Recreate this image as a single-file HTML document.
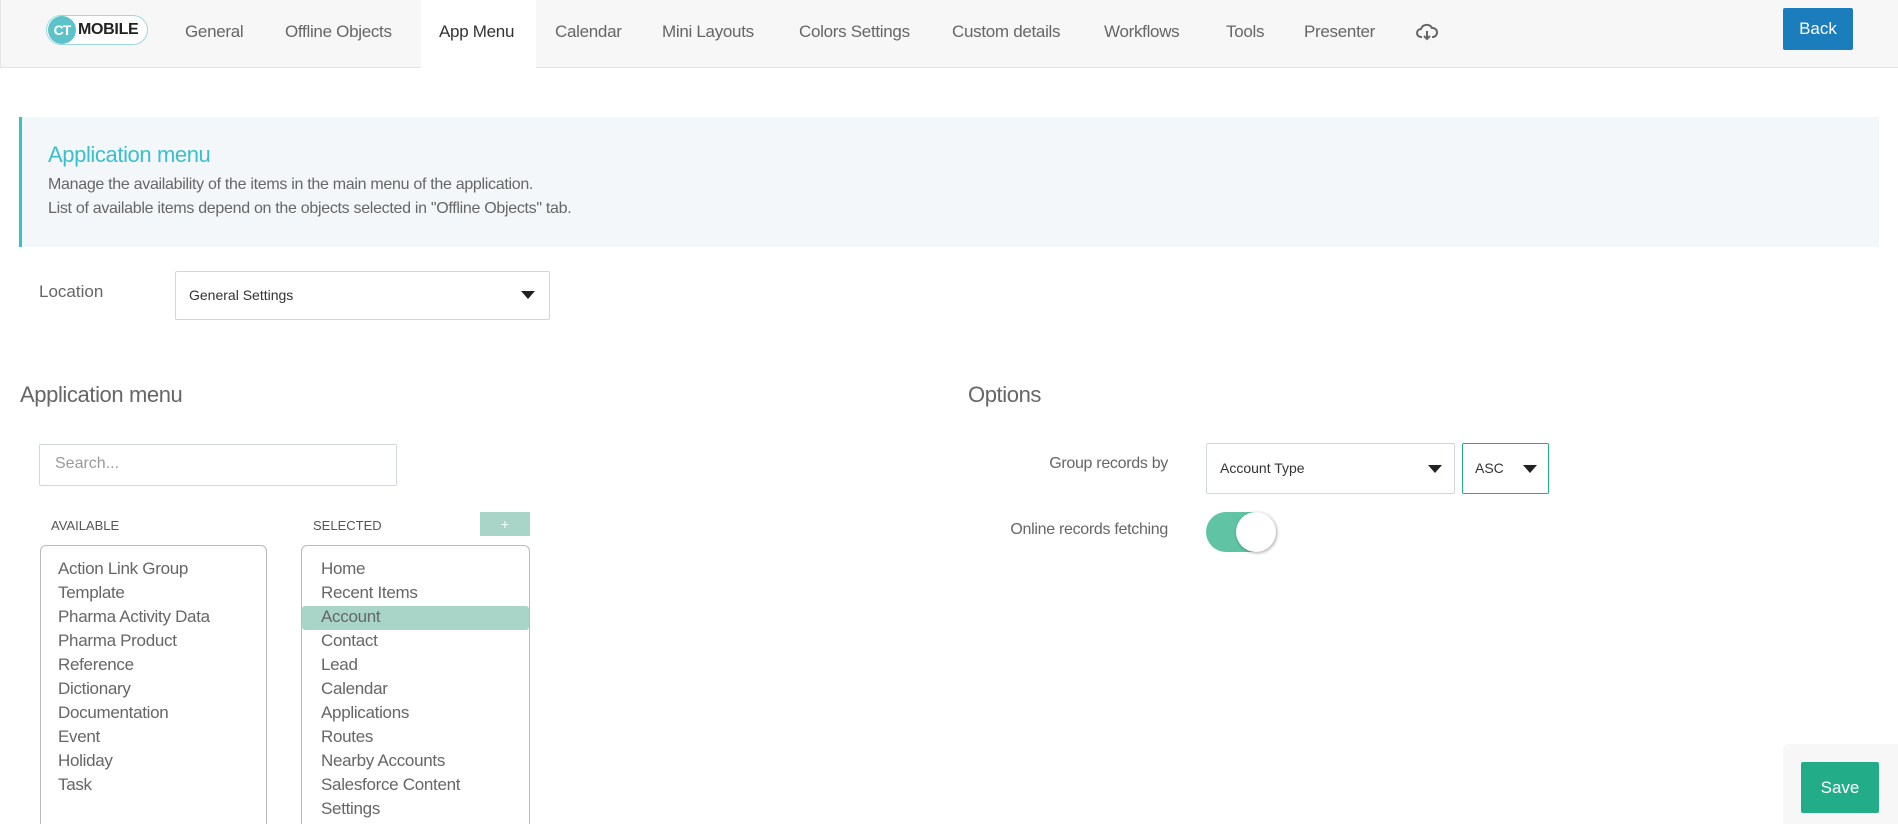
<!DOCTYPE html>
<html style="width:1898px;height:824px;overflow:hidden"><head><meta charset="utf-8"><style>
*{box-sizing:border-box;margin:0;padding:0}
body{width:1898px;height:824px;overflow:hidden;background:#fff;font-family:"Liberation Sans",sans-serif;color:#666;position:relative}
.a{position:absolute;white-space:nowrap}
.nav{position:absolute;left:0;top:0;width:1898px;height:68px;background:#f7f7f7;border-bottom:1px solid #e4e4e4;border-left:1px solid #e4e4e4}
.tab{position:absolute;top:22px;font-size:17px;color:#666;letter-spacing:-0.3px}
.sel{border:1px solid #cfd6dd;background:#fff;border-radius:2px}
.tri{position:absolute;width:0;height:0;border-left:7px solid transparent;border-right:7px solid transparent;border-top:8px solid #222}
.item{position:absolute;font-size:17px;color:#666;letter-spacing:-0.3px}
.box{position:absolute;top:545px;height:279px;border:1px solid #bbb;border-bottom:none;border-radius:6px 6px 0 0}
</style></head><body>
<div class="nav"></div>
<div class="a" style="left:421px;top:0;width:115px;height:69px;background:#fff"></div>
<div class="a" style="left:46px;top:15px;width:102px;height:30px;border:1px solid #9fd8dc;border-radius:15px;background:#fff"></div>
<div class="a" style="left:48px;top:16px;width:28px;height:28px;border-radius:50%;background:#5bc3c9;color:#fff;font-weight:bold;font-size:14px;line-height:28px;text-align:center;letter-spacing:-1px">CT</div>
<div class="a" style="left:78px;top:21px;font-weight:bold;font-size:16px;color:#222;letter-spacing:-0.3px">MOBILE</div>
<div class="tab" style="left:185px">General</div>
<div class="tab" style="left:285px">Offline Objects</div>
<div class="tab" style="left:439px;color:#333">App Menu</div>
<div class="tab" style="left:555px">Calendar</div>
<div class="tab" style="left:662px">Mini Layouts</div>
<div class="tab" style="left:799px">Colors Settings</div>
<div class="tab" style="left:952px">Custom details</div>
<div class="tab" style="left:1104px">Workflows</div>
<div class="tab" style="left:1226px">Tools</div>
<div class="tab" style="left:1304px">Presenter</div>
<svg class="a" style="left:1416px;top:23px" width="22" height="18" viewBox="0 0 22 18"><path d="M6 14H5a4 4 0 0 1 0-8 6 6 0 0 1 11-1 4.5 4.5 0 0 1 1 9h-1" fill="none" stroke="#666" stroke-width="2"/><path d="M11 8v8M8 13l3 3 3-3" fill="none" stroke="#666" stroke-width="2"/></svg>
<div class="a" style="left:1783px;top:8px;width:70px;height:42px;background:#1b7dbb;border-radius:2px;color:#fff;font-size:17px;line-height:42px;text-align:center">Back</div>

<div class="a" style="left:19px;top:117px;width:1860px;height:130px;background:#f3f7fa;border-left:3px solid #3bbfcb"></div>
<div class="a" style="left:48px;top:142px;font-size:22px;color:#3bbfcb;letter-spacing:-0.4px">Application menu</div>
<div class="a" style="left:48px;top:176px;font-size:16px;letter-spacing:-0.3px">Manage the availability of the items in the main menu of the application.</div>
<div class="a" style="left:48px;top:200px;font-size:16px;letter-spacing:-0.3px">List of available items depend on the objects selected in "Offline Objects" tab.</div>

<div class="a" style="left:39px;top:282px;font-size:17px">Location</div>
<div class="a sel" style="left:175px;top:271px;width:375px;height:49px"></div>
<div class="a" style="left:189px;top:287px;font-size:14px;color:#333">General Settings</div>
<div class="tri" style="left:521px;top:291px"></div>

<div class="a" style="left:20px;top:382px;font-size:22px;letter-spacing:-0.4px">Application menu</div>
<div class="a" style="left:968px;top:382px;font-size:22px;letter-spacing:-0.4px">Options</div>

<div class="a sel" style="left:39px;top:444px;width:358px;height:42px"></div>
<div class="a" style="left:55px;top:455px;font-size:16px;color:#999">Search...</div>
<div class="a" style="left:51px;top:518px;font-size:13px;color:#555">AVAILABLE</div>
<div class="a" style="left:313px;top:518px;font-size:13px;color:#555">SELECTED</div>
<div class="a" style="left:480px;top:512px;width:50px;height:24px;background:#a8d5c8;color:#fff;text-align:center;font-size:14px;line-height:24px">+</div>
<div class="box" style="left:40px;width:227px"></div>
<div class="box" style="left:301px;width:229px"></div>
<div class="a" style="left:302px;top:606px;width:227px;height:24px;background:#a8d5c8;border-radius:3px"></div>

<div class="item" style="left:58px;top:559px">Action Link Group</div>
<div class="item" style="left:58px;top:583px">Template</div>
<div class="item" style="left:58px;top:607px">Pharma Activity Data</div>
<div class="item" style="left:58px;top:631px">Pharma Product</div>
<div class="item" style="left:58px;top:655px">Reference</div>
<div class="item" style="left:58px;top:679px">Dictionary</div>
<div class="item" style="left:58px;top:703px">Documentation</div>
<div class="item" style="left:58px;top:727px">Event</div>
<div class="item" style="left:58px;top:751px">Holiday</div>
<div class="item" style="left:58px;top:775px">Task</div>

<div class="item" style="left:321px;top:559px">Home</div>
<div class="item" style="left:321px;top:583px">Recent Items</div>
<div class="item" style="left:321px;top:607px">Account</div>
<div class="item" style="left:321px;top:631px">Contact</div>
<div class="item" style="left:321px;top:655px">Lead</div>
<div class="item" style="left:321px;top:679px">Calendar</div>
<div class="item" style="left:321px;top:703px">Applications</div>
<div class="item" style="left:321px;top:727px">Routes</div>
<div class="item" style="left:321px;top:751px">Nearby Accounts</div>
<div class="item" style="left:321px;top:775px">Salesforce Content</div>
<div class="item" style="left:321px;top:799px">Settings</div>

<div class="a" style="left:968px;top:455px;width:200px;text-align:right;font-size:16px;letter-spacing:-0.3px">Group records by</div>
<div class="a sel" style="left:1206px;top:443px;width:249px;height:51px"></div>
<div class="a" style="left:1220px;top:460px;font-size:14px;color:#333">Account Type</div>
<div class="tri" style="left:1428px;top:465px"></div>
<div class="a" style="left:1462px;top:443px;width:87px;height:51px;border:1px solid #22ad88;border-radius:2px"></div>
<div class="a" style="left:1475px;top:460px;font-size:14px;color:#333">ASC</div>
<div class="tri" style="left:1523px;top:465px"></div>
<div class="a" style="left:918px;top:521px;width:250px;text-align:right;font-size:16px;letter-spacing:-0.3px">Online records fetching</div>
<div class="a" style="left:1206px;top:512px;width:68px;height:40px;border-radius:20px;background:#5fc3a4"></div>
<div class="a" style="left:1236px;top:512px;width:40px;height:40px;border-radius:50%;background:#fff;box-shadow:1px 1px 3px rgba(0,0,0,.35)"></div>

<div class="a" style="left:1783px;top:744px;width:115px;height:80px;background:#f7f7f7;border-radius:6px 0 0 0"></div>
<div class="a" style="left:1801px;top:762px;width:78px;height:51px;background:#22ad88;border-radius:2px;color:#fff;font-size:17px;line-height:51px;text-align:center">Save</div>
</body></html>
